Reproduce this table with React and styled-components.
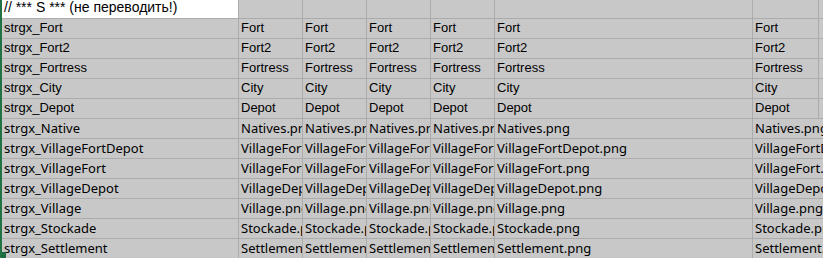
import React from 'react';
import styled, { createGlobalStyle } from 'styled-components';

const GlobalStyle = createGlobalStyle`
  html, body {
    margin: 0;
    padding: 0;
    background: #c8c8c8;
    overflow: hidden;
  }
`;

const columns = '237px 64px 64px 64px 64px 258px 66px 1fr';

const Sheet = styled.div`
  position: relative;
  display: flex;
  flex-direction: column;
  width: 823px;
  height: 258px;
  border-left: 2px solid #217346;
  box-sizing: border-box;
  overflow: hidden;
  background: #c8c8c8;
`;

const Row = styled.div`
  display: grid;
  grid-template-columns: ${columns};
  height: ${(p) => p.$height}px;
  flex-shrink: 0;
`;

const Cell = styled.div`
  box-sizing: border-box;
  display: flex;
  align-items: flex-end;
  padding: 0 0 ${(p) => (p.$aptos ? 2 : 3)}px 2px;
  border-right: ${(p) => (p.$noRight ? 'none' : '1px solid #acacac')};
  border-bottom: 1px solid #acacac;
  background: ${(p) => (p.$white ? '#ffffff' : 'transparent')};
  font-family: ${(p) =>
    p.$aptos ? '"Noto Sans", "Liberation Sans", sans-serif' : '"Liberation Sans", Arial, sans-serif'};
  font-size: ${(p) => (p.$white ? 14 : 13)}px;
  line-height: 15px;
  color: #000;
  white-space: nowrap;
  overflow: ${(p) => (p.$spill ? 'visible' : 'hidden')};
  position: relative;
  z-index: ${(p) => (p.$spill ? 1 : 0)};
`;

const FillHandle = styled.div`
  position: absolute;
  left: -2px;
  bottom: 0;
  width: 6px;
  height: 6px;
  background: #1d6b40;
  z-index: 2;
`;

const rows = [
  ['strgx_Fort', 'Fort', 'Fort', 'Fort', false],
  ['strgx_Fort2', 'Fort2', 'Fort2', 'Fort2', false],
  ['strgx_Fortress', 'Fortress', 'Fortress', 'Fortress', false],
  ['strgx_City', 'City', 'City', 'City', false],
  ['strgx_Depot', 'Depot', 'Depot', 'Depot', false],
  ['strgx_Native', 'Natives.png', 'Natives.png', 'Natives.png', true],
  ['strgx_VillageFortDepot', 'VillageFortDepot.png', 'VillageFortDepot.png', 'VillageFortDepot.png', true],
  ['strgx_VillageFort', 'VillageFort.png', 'VillageFort.png', 'VillageFort.png', true],
  ['strgx_VillageDepot', 'VillageDepot.png', 'VillageDepot.png', 'VillageDepot.png', true],
  ['strgx_Village', 'Village.png', 'Village.png', 'Village.png', true],
  ['strgx_Stockade', 'Stockade.png', 'Stockade.png', 'Stockade.png', true],
  ['strgx_Settlement', 'Settlement.png', 'Settlement.png', 'Settlement.png', true],
];

export default function App() {
  return (
    <>
      <GlobalStyle />
      <Sheet>
        <Row $height={19}>
          <Cell $white>// *** S *** (не переводить!)</Cell>
          <Cell />
          <Cell />
          <Cell />
          <Cell />
          <Cell />
          <Cell />
          <Cell $noRight />
        </Row>
        {rows.map(([key, short, wide, last, aptos]) => (
          <Row key={key} $height={20}>
            <Cell $aptos={aptos}>{key}</Cell>
            <Cell $aptos={aptos}>{short}</Cell>
            <Cell $aptos={aptos}>{short}</Cell>
            <Cell $aptos={aptos}>{short}</Cell>
            <Cell $aptos={aptos}>{short}</Cell>
            <Cell $aptos={aptos}>{wide}</Cell>
            <Cell $aptos={aptos} $spill={aptos} $noRight={aptos}>
              {last}
            </Cell>
            <Cell $noRight />
          </Row>
        ))}
        <FillHandle />
      </Sheet>
    </>
  );
}
